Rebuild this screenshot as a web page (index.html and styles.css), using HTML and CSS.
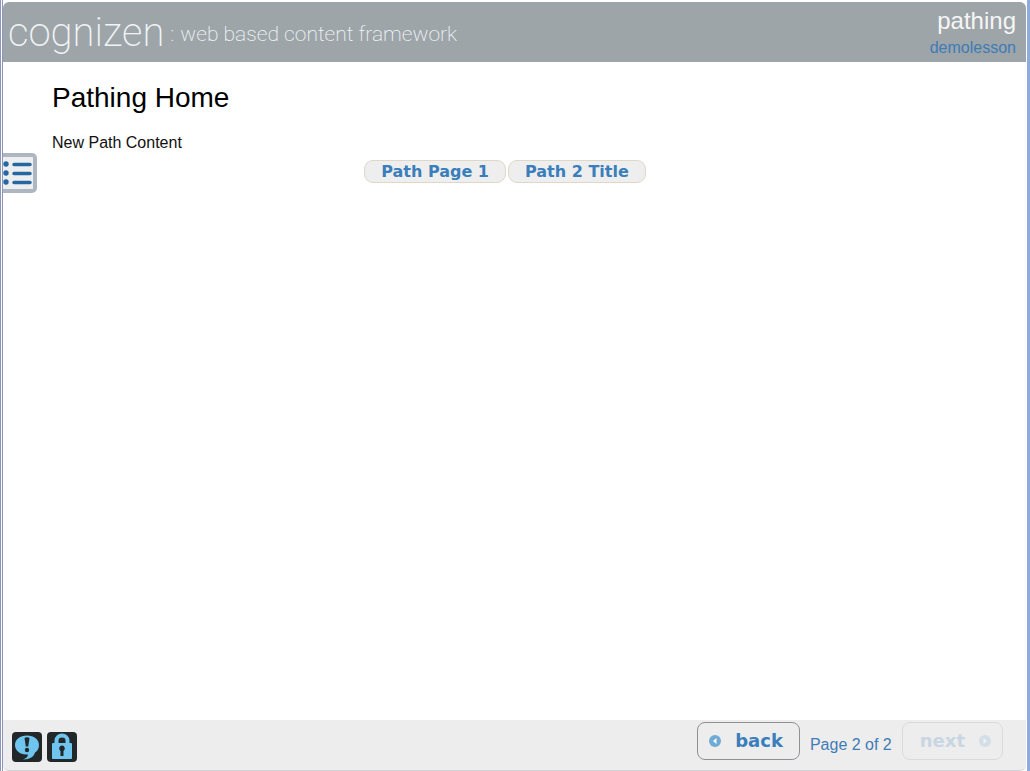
FILE: index.html
```html
<!DOCTYPE html>
<html lang="en">
<head>
<meta charset="utf-8">
<title>pathing - demolesson</title>
<link rel="stylesheet" href="styles.css">
</head>
<body>
<div class="frame">
  <header class="header">
    <div class="brand"><span class="brand-name">cognizen</span><span class="brand-tag"><span class="brand-colon">:</span>web based content framework</span></div>
    <div class="course">
      <div class="course-name">pathing</div>
      <div class="lesson-name">demolesson</div>
    </div>
  </header>
  <button class="menu-tab" type="button" aria-label="Table of contents">
    <svg width="30" height="32" viewBox="0 0 30 32" aria-hidden="true">
      <g fill="#2467a3"><circle cx="3" cy="7" r="2.700"/><circle cx="3" cy="16" r="2.700"/><circle cx="3" cy="25" r="2.700"/></g>
      <path d="M11 7.500H27M11 16.500H27M11 25.500H27" stroke="#2467a3" stroke-width="3.500" stroke-linecap="round"/>
    </svg>
  </button>
  <main class="content">
    <h1 class="title">Pathing Home</h1>
    <p class="text">New Path Content</p>
    <div class="paths">
      <button class="path" type="button">Path Page 1</button>
      <button class="path" type="button">Path 2 Title</button>
    </div>
  </main>
  <footer class="footer">
    <div class="tools">
      <button class="tool" type="button" aria-label="Comments">
        <svg width="30" height="30" viewBox="0 0 30 30" aria-hidden="true">
          <path d="M15 3.500C8 3.500 3 7.500 3 13s5 9.500 11 9.500h2c0 2-2 4-5 5 7 0 11-3 12-7 2.500-1.500 4-4 4-7.500 0-5.500-5-9.500-12-9.500z" fill="#6fc5ee"/>
          <path d="M12.500 6q2.500-1.500 5 0l-1.300 8.500h-2.400z" fill="#222829"/><circle cx="15" cy="18" r="2.200" fill="#222829"/>
        </svg>
      </button>
      <button class="tool" type="button" aria-label="Lock">
        <svg width="30" height="30" viewBox="0 0 30 30" aria-hidden="true">
          <path d="M9.500 13V8.500a5.500 5 0 0 1 11 0V13" fill="none" stroke="#6fc5ee" stroke-width="4"/>
          <rect x="5" y="11" width="20" height="16" rx="1" fill="#6fc5ee"/>
          <path d="M15 13.500a3 3 0 0 1 1.500 5.500V24h-3v-5A3 3 0 0 1 15 13.500z" fill="#222829"/>
        </svg>
      </button>
    </div>
    <nav class="pager" aria-label="Pages">
      <button class="nav" type="button">
        <svg width="12" height="12" viewBox="0 0 12 12" aria-hidden="true"><circle cx="6" cy="6" r="6" fill="#6fabd4"/><path d="M7.500 3v6L4 6z" fill="#fff"/></svg>
        back
      </button>
      <span class="count">Page 2 of 2</span>
      <button class="nav" type="button" disabled>
        next
        <svg width="12" height="12" viewBox="0 0 12 12" aria-hidden="true"><circle cx="6" cy="6" r="6" fill="#6fabd4"/><path d="M4.500 3v6L8 6z" fill="#fff"/></svg>
      </button>
    </nav>
  </footer>
</div>
</body>
</html>
```
FILE: styles.css
```css
* { box-sizing: border-box; }
body {
  margin: 0;
  background: #fff;
  color: #111;
  font-family: "Liberation Sans", Arial, sans-serif;
}
button { margin: 0; font: inherit; }
svg { display: block; flex: none; }
.frame {
  position: relative;
  display: flex;
  flex-direction: column;
  min-height: 100vh;
  padding: 2px 1px 0 0;
  border-left: 3px double #8b96b8;
  border-right: 3px solid #8faadc;
}
.header {
  display: flex;
  justify-content: space-between;
  height: 60px;
  padding: 0 10px 0 5px;
  background: #9da5a9;
  border-radius: 6px 6px 0 0;
}
.brand {
  display: flex;
  align-items: center;
  color: #f1f4f6;
  font-family: Roboto, sans-serif;
  line-height: 60px;
}
.brand-name { padding-top: 2px; font-size: 40px; font-weight: 200; }
.brand-tag { padding-top: 4px; font-size: 21px; font-weight: 200; }
.brand-colon { margin: 0 6px; }
.course { padding-top: 4px; text-align: right; }
.course-name { color: #f6f6f6; font-size: 24px; line-height: 30px; }
.lesson-name { color: #3f7bb5; font-size: 16px; line-height: 24px; }
.menu-tab {
  position: absolute;
  top: 153px;
  left: 0;
  width: 34px;
  height: 40px;
  padding: 0;
  background: #eee;
  border: 4px solid #adb7c1;
  border-left: 0;
  border-radius: 0 5px 5px 0;
}
.content { flex: 1; padding: 20px 68px 20px 49px; }
.title { margin: 0; color: #000; font-size: 28px; font-weight: 400; line-height: 32px; }
.text { margin: 19px 0 7px; font-size: 16px; line-height: 20px; }
.paths { display: flex; justify-content: center; gap: 2px; }
.path {
  height: 23px;
  padding: 0 16px;
  background: #eee;
  border: 1px solid #ddd8c8;
  border-radius: 9px;
  color: #3a7ebb;
  font: bold 16px/20px "DejaVu Sans", Verdana, sans-serif;
}
.footer {
  display: flex;
  justify-content: space-between;
  height: 51px;
  padding: 2px 23px 0 9px;
  background: #ededed;
  border-bottom: 1px solid #d4d4d8;
  border-radius: 0 0 6px 6px;
}
.tools { display: flex; gap: 5px; padding-top: 10px; }
.tool {
  width: 30px;
  height: 30px;
  padding: 0;
  background: #222829;
  border: 0;
  border-radius: 4px;
}
.pager { display: flex; gap: 10px; }
.nav {
  display: flex;
  align-items: center;
  gap: 14px;
  height: 38px;
  padding: 0 16px 0 11px;
  background: transparent;
  border: 1px solid #8f9295;
  border-radius: 8px;
  color: #3a7ebb;
  font: bold 18px/24px "DejaVu Sans", Verdana, sans-serif;
}
.nav:disabled { padding: 0 11px 0 17px; opacity: 0.2; }
.count { padding-top: 13px; color: #3f7bb5; font-size: 16px; line-height: 20px; }
```
